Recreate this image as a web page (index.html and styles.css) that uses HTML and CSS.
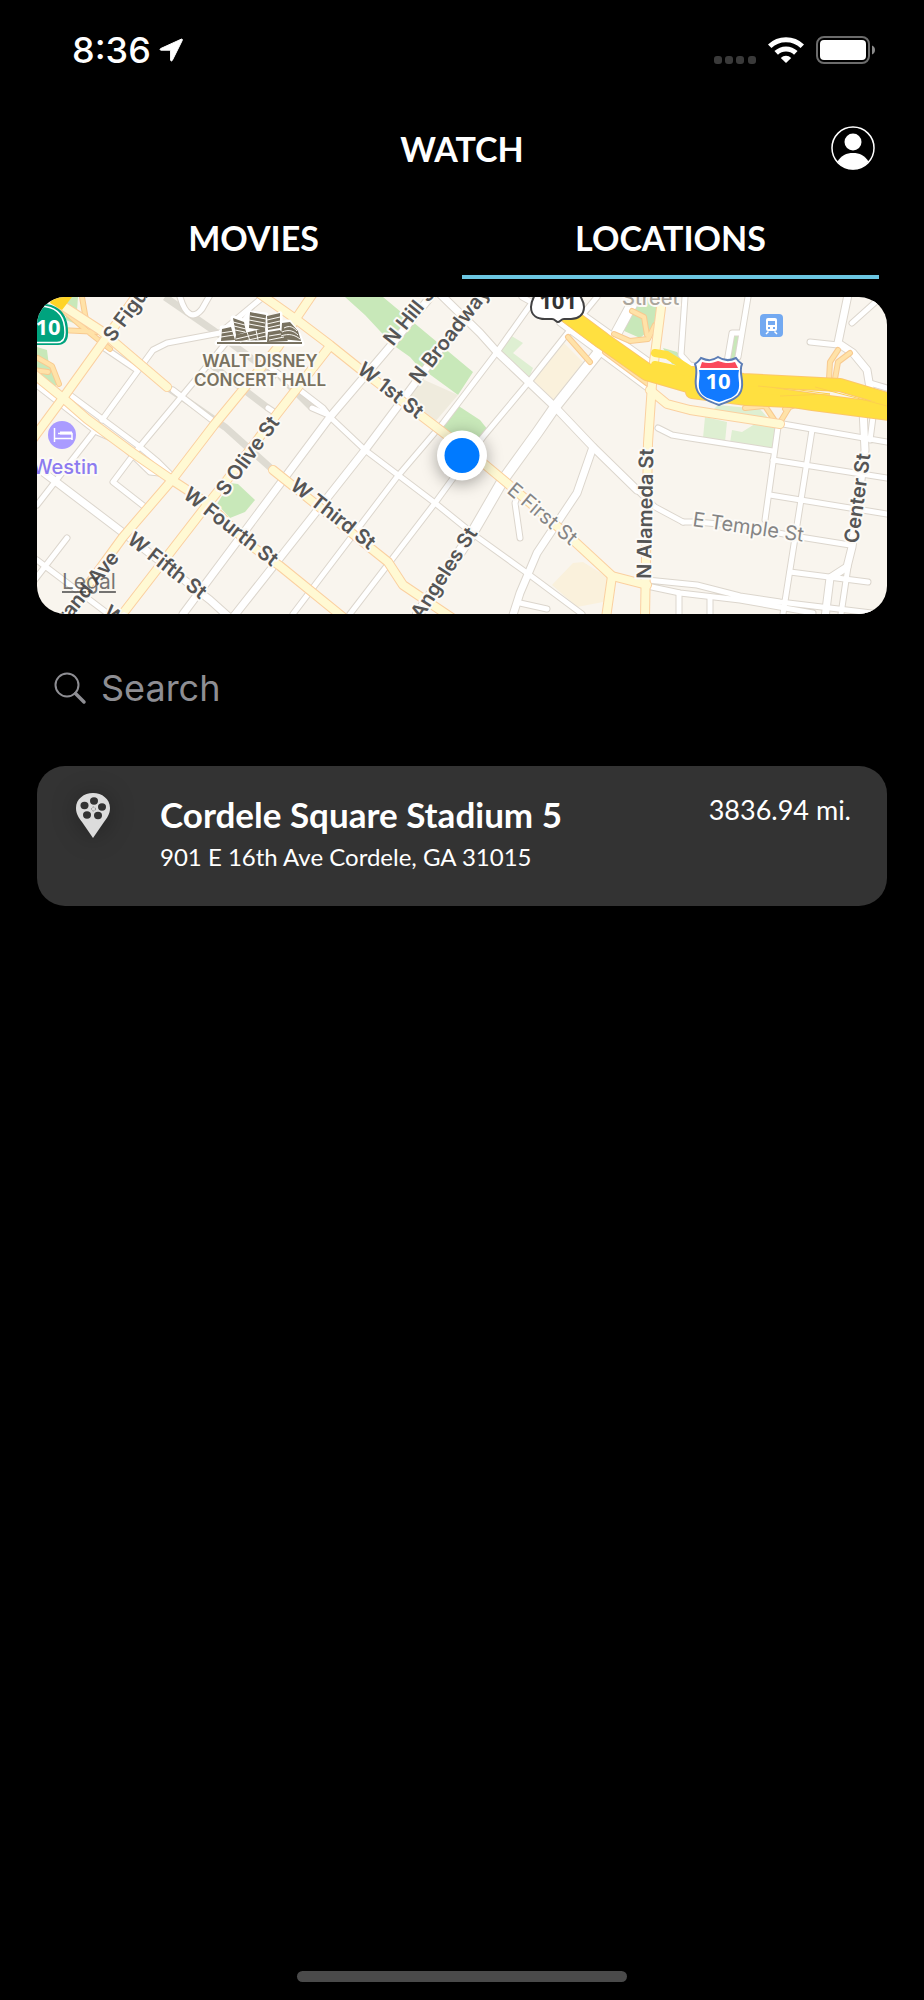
FILE: index.html
```html
<!DOCTYPE html>
<html lang="en">
<head>
    <meta charset="UTF-8">
    <meta name="viewport" content="width=device-width, initial-scale=1.0">
    <title>Watch - Locations</title>
    <link rel="stylesheet" href="styles.css">
</head>
<body>

<div class="status-bar">
    <div class="status-time">
        <span>8:36</span>
        <svg class="icon-arrow" viewBox="0 0 24 24" width="24" height="24" aria-hidden="true">
            <path d="M22.2 1.2 1.6 10.6c-.9.5-.6 1.6.4 1.6h9.600v9.800c0 1 1.200 1.300 1.700.4L23.300 2.300c.4-.8-.3-1.500-1.100-1.100z" fill="#fff" stroke="#fff" stroke-linejoin="round"/>
        </svg>
    </div>
    <div class="status-icons">
        <svg class="icon-signal" viewBox="0 0 42 8" width="42" height="8" aria-hidden="true">
            <g fill="#3a3a3a">
                <rect x="0" width="8" height="8" rx="3"/>
                <rect x="11" width="8" height="8" rx="3"/>
                <rect x="22" width="8" height="8" rx="3"/>
                <rect x="34" width="8" height="8" rx="3"/>
            </g>
        </svg>
        <svg viewBox="0 0 36 26" width="36" height="26" aria-hidden="true">
            <g fill="none" stroke="#fff" stroke-width="5">
                <path d="M1.700 9.300a23.500 23.500 0 0 1 32.600 0"/>
                <path d="M8.200 15.900a14 14 0 0 1 19.600 0"/>
            </g>
            <path d="M18 26l-5.200-5.100a7.400 7.400 0 0 1 10.400 0z" fill="#fff"/>
        </svg>
        <svg viewBox="0 0 60 28" width="60" height="28" aria-hidden="true">
            <rect x="1" y="1" width="52" height="26" rx="7" fill="none" stroke="#6c6c6c" stroke-width="2"/>
            <rect x="4" y="4" width="46" height="20" rx="4" fill="#fff"/>
            <path d="M56 9.500c4 1.500 4 7.500 0 9z" fill="#8a8a8a"/>
        </svg>
    </div>
</div>

<header class="header">
    <h1>WATCH</h1>
    <button type="button" class="profile" aria-label="Profile">
        <svg viewBox="0 0 44 44" width="44" height="44">
            <circle cx="22" cy="22" r="21" fill="none" stroke="#fff" stroke-width="1.500"/>
            <circle cx="22" cy="16" r="8.500" fill="#fff"/>
            <path d="M6.500 35.500C10 29.500 15.500 27 22 27s12 2.500 15.500 8.500A21 21 0 0 1 22 43.500 21 21 0 0 1 6.500 35.500z" fill="#fff"/>
        </svg>
    </button>
</header>

<nav class="tabs">
    <a href="#movies">MOVIES</a>
    <a href="#locations" class="active">LOCATIONS</a>
</nav>

<main>
    <div class="map">
        <svg class="map-canvas" viewBox="37 297 850 317" preserveAspectRatio="xMidYMid slice" role="img" aria-label="Map of downtown">
            <defs>
                <g id="minor">
                    <path d="M30 380 97 432 118 441 150 472 168 474"/>
                    <path d="M70 395 140 447 158 462 172 476"/>
                    <path d="M37 505 93 433"/>
                    <path d="M102 420 153 350 167 343 220 333 263 297"/>
                    <path d="M103 347 137 370"/>
                    <path d="M145 507 113 482 137 450 212 360 250 313"/>
                    <path d="M173 390 212 420"/>
                    <path d="M180 297c6 20 14 22 22 12l8-14"/>
                    <path d="M37 560 107 613M67 538 30 586"/>
                    <path d="M293 614 397 477 443 423 497 352 536 297"/>
                    <path d="M350 614 435 503 483 437 528 383 570 330 597 297"/>
                    <path d="M267 365 323 408 330 417 365 450 435 503 477 537 527 573 582 614"/>
                    <path d="M268 408 277 414M312 408 326 414"/>
                    <path d="M520 538 515 503 517 497M520 603 547 609"/>
                    <path d="M560 323 650 390M577 310 650 362M522 297 533 303"/>
                    <path d="M683 522 697 522 740 526 800 537 850 545"/>
                    <path d="M658 428 672 435 690 438 773 451"/>
                    <path d="M685 297 681 355 690 365 705 367"/>
                    <path d="M748 297 738 357M742 333 732 333 727 362"/>
                    <path d="M810 342 838 345M852 323 880 298M870 383 887 388"/>
                    <path d="M783 424 887 442M873 417 870 440"/>
                    <path d="M778 427 765 520M812 430 783 614"/>
                    <path d="M773 460 887 478M770 495 887 514M790 572 868 582"/>
                    <path d="M848 567 841 614"/>
                    <path d="M647 580 697 585 740 596 780 602 880 614M647 586 680 593 740 600 813 613"/>
                    <path d="M710 598V620M679 593V620"/>
                </g>
                <g id="major">
                    <path d="M30 462 130 538 210 600 230 618"/>
                    <path d="M183 614 330 417 393 343 436 290"/>
                    <path d="M234 616 365 450 410 390 484 290"/>
                    <path d="M436 290 480 333 497 352 555 407 593 447 637 490"/>
                    <path d="M593 447 577 493 537 553 520 593 512 618"/>
                    <path d="M849 290 838 343 853 353 867 370 870 388"/>
                    <path d="M863 410 865 450 852 547 847 567 830 578 825 618"/>
                </g>
                <path id="minor-end" d="M637 490 655 507 683 522"/>
                <path id="avenue" d="M418 614 470 537 503 480 537 433 555 407 602 348M617 332 636 297"/>
                <g id="arterial">
                    <path d="M60 304 100 330 167 387"/>
                    <path d="M30 371 63 398 87 419 133 453 172 480 207 503 250 545 280 566 344 618"/>
                    <path d="M142 288 63 398 32 440"/>
                    <path d="M312 295 295 320 278 347 214 425 172 480 123 537 64 618"/>
                    <path d="M121 616 203 510 227 480 277 414 330 346"/>
                    <path d="M260 294 297 320 330 345 360 369 440 430 483 463 507 483 573 540 612 576 647 585"/>
                    <path d="M612 576 606 618M663 292 653 370 648 443 645 618"/>
                    <path d="M273 470 388 562 403 585 452 618"/>
                    <path d="M650 390 667 404 690 410 780 424"/>
                </g>
                <g id="ramps">
                    <path d="M82 297 86 320 63 310 86 330 110 349M60 330 100 332"/>
                    <path d="M38 358 52 366 59 384M34 370 48 372"/>
                    <path d="M568 337 590 362"/>
                    <path d="M614 334 630 341 648 339 655 325 660 323M632 311 644 317 647 335"/>
                    <path d="M605 352 648 384"/>
                    <path d="M745 408 765 406 775 421M790 406 779 424M800 403 785 409"/>
                    <path d="M829 379 830 362 838 350M835 379 838 362 850 353"/>
                </g>
                <g id="highway">
                    <path d="M556 306 603 341 647 372 692 385 747 392 813 402 890 412"/>
                </g>
                <g id="highway-upper">
                    <path d="M692 373 743 380 840 385 890 400"/>
                    <path d="M692 392 747 399 813 402 890 409"/>
                </g>
                <path id="highway-ramps" d="M655 353 667 355 692 371M655 365 692 373"/>
            </defs>

            <rect class="land" x="37" y="297" width="850" height="317"/>

            <!-- parks and campuses -->
            <g class="park">
                <path d="M345 297H383L473 372 458 395 417 365 410 357 393 345 365 315z"/>
                <path d="M457 405 480 420 488 430 480 445 440 428z"/>
                <path d="M230 483 238 484 255 500 245 512 230 518 217 504z"/>
                <path d="M636 297H662L653 327 640 338 622 330z"/>
                <path d="M663 348 677 352 690 368 672 364z"/>
                <path d="M733 334 740 336 736 362 728 360z"/>
                <path d="M37 347 47 350 49 366 60 383 52 388 37 374z"/>
                <path d="M66 297H78L76 324 66 320z"/>
            </g>
            <g class="park-light">
                <path d="M510 335 523 343 513 353 533 368 529 378 500 350z"/>
                <path d="M705 417 727 422 725 442 703 438zM732 430 742 432 758 422 777 428 773 450 730 443z"/>
                <path d="M718 405 760 409 768 418 712 411z"/>
            </g>
            <path class="plaza" d="M420 378 458 395 434 423 404 402z"/>
            <path class="campus" d="M563 342 583 362 555 402 533 380zM573 563 583 562 612 580 603 602 577 607 552 585z"/>

            <!-- tunnels -->
            <path class="tunnel" d="M165 297 213 330 277 377 M167 387 225 427 273 470 M205 360 268 408 M280 376 312 408"/>

            <use class="casing-minor" href="#minor"/>
            <use class="casing-minor" href="#minor-end"/>
            <use class="casing-major" href="#major"/>
            <use class="casing-avenue" href="#avenue"/>
            <use class="fill-minor" href="#minor"/>
            <use class="fill-minor" href="#minor-end"/>
            <use class="fill-major" href="#major"/>
            <use class="fill-avenue" href="#avenue"/>
            <use class="casing-ramp" href="#ramps"/>
            <use class="fill-ramp" href="#ramps"/>
            <use class="casing-arterial" href="#arterial"/>
            <use class="fill-arterial" href="#arterial"/>
            <use class="casing-highway" href="#highway"/>
            <use class="casing-upper" href="#highway-upper"/>
            <use class="fill-highway" href="#highway"/>
            <use class="fill-upper" href="#highway-upper"/>
            <use class="fill-highway-ramps" href="#highway-ramps"/>
            <path class="median" d="M758 386 800 390 830 394M780 396 830 394M815 387 887 406"/>
            <path class="corner" d="M52 297H72L62 310 50 303z"/>

            <!-- street names -->
            <g class="street">
                <text transform="translate(113 343) rotate(-53)">S Figueroa St</text>
                <text transform="translate(226 497) rotate(-54)">S Olive St</text>
                <text transform="translate(120 558) rotate(-51)" text-anchor="end">Grand Ave</text>
                <text transform="translate(182 497) rotate(38)">W Fourth St</text>
                <text transform="translate(126 542) rotate(38)">W Fifth St</text>
                <text transform="translate(102 615) rotate(38)">W Sixth St</text>
                <text transform="translate(289 488) rotate(38)">W Third St</text>
                <text transform="translate(356 372) rotate(38)">W 1st St</text>
                <text transform="translate(393 347) rotate(-51)">N Hill St</text>
                <text transform="translate(419 385) rotate(-52)">N Broadway</text>
                <text transform="translate(478 533) rotate(-57)" text-anchor="end">Los Angeles St</text>
                <text transform="translate(651 579) rotate(-89)">N Alameda St</text>
                <text transform="translate(858 544) rotate(-82)">Center St</text>
            </g>
            <g class="street street-light">
                <text transform="translate(506 492) rotate(40)">E First St</text>
                <text transform="translate(692 526) rotate(8)">E Temple St</text>
            </g>
            <text class="district" x="622" y="305">Street</text>

            <!-- concert hall -->
            <g class="hall">
                <path class="hall-halo" d="M217 343 222 338 222 328 233 327 233 318 246 322 250 313 266 315 266 323 280 314 280 324 289 322 298 334 302 344z"/>
                <path d="M217 342h85v2h-85z"/>
                <path d="M222 329l9-2 4 13-14 1zM233 318l11 4 2 10-10 3zM250 312l16 3-1 15-16-2zM267 316l13-3v15l-12 2zM282 323l8-1 8 9 3 10-20-2zM236 335l29-7 1 12-31 1zM268 332l12-2 8 11-21 1z"/>
                <path class="hall-lines" d="M221 333l13-2M221 337l13-2M233 322l12 3M234 326l12 3M235 330l10 2M250 316l16 3M249 320l16 3M249 324l16 3M267 320l13-3M267 324l13-3M267 328l13-3M284 328c6-3 9-1 13 3M282 332c7-3 12-1 16 3M281 336c8-3 14-1 19 3M236 339l30-7M240 342l26-6M269 336l12-2M269 340l15-3M247 332l3 9M256 330l2 10"/>
            </g>
            <g class="landmark" text-anchor="middle">
                <text x="260" y="367">WALT DISNEY</text>
                <text x="260" y="386">CONCERT HALL</text>
            </g>

            <!-- hotel -->
            <circle cx="62" cy="435" r="14" fill="#aa9bff"/>
            <path d="M54.500 428v14M54.500 438.500h17.500v-5H58M72 433v7" fill="none" stroke="#fff" stroke-width="1.500"/>
            <path d="M60 431.500h12v3H60z" fill="#fff"/>
            <text class="hotel" x="98" y="474" text-anchor="end">Westin</text>

            <!-- rail station -->
            <rect x="760" y="314" width="23" height="23" rx="4" fill="#73a9f1"/>
            <path d="M768 318h7a2 2 0 0 1 2 2v9a2 2 0 0 1-2 2h-7a2 2 0 0 1-2-2v-9a2 2 0 0 1 2-2z" fill="#fff"/>
            <path d="M768 321h7v4h-7zM768 327h2v2h-2zM773 327h2v2h-2z" fill="#73a9f1"/>
            <path d="M768.500 331.500l-2.500 2.500M774.500 331.500l2.500 2.500" stroke="#fff" stroke-width="1.500"/>

            <!-- highway shields -->
            <path d="M36 304h10c16 2 23 14 22 30 0 7-4 11-10 11H36z" fill="#00a37e"/>
            <path d="M36 306.500h9c14 2 20 12 20 26 0 7-3 10-8 10H36" fill="none" stroke="#fff" stroke-width="1.500"/>
            <text class="shield" x="48" y="335">10</text>

            <path d="M537 290c-3 8-6 10-6 17 0 9 7 12 14 12h7c3 0 4 3 6 3s3-3 6-3h7c7 0 13-4 13-12 0-7-4-9-6-17z" fill="#fff" stroke="#414142" stroke-width="2"/>
            <text class="shield shield-dark" x="558" y="309">101</text>

            <path d="M701 358c7 3 11 3 17-1 6 4 12 4 18 1 2 3 3 4 6 6-4 9 3 16-1 27-3 8-12 10-22 14-11-4-19-7-22-15-4-10 2-17-2-26 3-2 4-3 6-6z" fill="#fff" stroke="#5c7db5" stroke-width="2"/>
            <path d="M702 362c6 2 11 1 16-1 6 2 11 3 17 1l3 6h-38z" fill="#fb4a5c"/>
            <path d="M699 370h40c-2 8 2 14-1 21-2 6-10 8-19 11-9-3-17-5-19-11-3-7 1-14-1-21z" fill="#127aff"/>
            <text class="shield" x="718" y="389">10</text>

            <!-- current position -->
            <circle class="marker" cx="462" cy="455.500" r="25"/>
            <circle cx="462" cy="455.500" r="17.500" fill="#007aff"/>
        </svg>
        <a href="#legal" class="legal">Legal</a>
    </div>

    <form class="search" role="search">
        <label for="search">
            <svg viewBox="0 0 34 34" width="34" height="34" role="img" aria-label="Search theaters">
                <g fill="none" stroke="#8e8e93" stroke-linecap="round">
                    <circle cx="14" cy="14" r="11.500" stroke-width="2"/>
                    <path d="M22.500 22.500 31 31" stroke-width="3.500"/>
                </g>
            </svg>
        </label>
        <input type="search" id="search" placeholder="Search">
    </form>

    <article class="theater">
        <svg class="pin" viewBox="0 0 34 46" width="34" height="46" aria-hidden="true">
            <path d="M17 1C8 1 0 7 0 16c0 6 3 10 6 14l11 16 11-16c3-4 6-8 6-14C34 7 26 1 17 1z" fill="#dcdcdc"/>
            <g fill="#333">
                <ellipse cx="18" cy="9" rx="4" ry="3.700"/>
                <ellipse cx="8.500" cy="13.500" rx="4" ry="3.700"/>
                <ellipse cx="26" cy="15" rx="4" ry="3.700"/>
                <ellipse cx="11" cy="23" rx="4" ry="3.700"/>
                <ellipse cx="22" cy="23.500" rx="4" ry="3.700"/>
            </g>
            <circle cx="17.500" cy="17" r="2" fill="none" stroke="#888" stroke-dasharray="1.500 1"/>
        </svg>
        <div class="theater-info">
            <h2>Cordele Square Stadium 5</h2>
            <p>901 E 16th Ave Cordele, GA 31015</p>
        </div>
        <span class="distance">3836.94 mi.</span>
    </article>
</main>

<div class="home-indicator"></div>

</body>
</html>
```

FILE: styles.css
```css
* {
    box-sizing: border-box;
}
body {
    margin: 0;
    min-height: 100vh;
    display: flex;
    flex-direction: column;
    background: #000;
    color: #fff;
    font-family: Lato, "Liberation Sans", sans-serif;
}
h1, h2, p {
    margin: 0;
}

/* status bar */
.status-bar {
    display: flex;
    justify-content: space-between;
    align-items: center;
    height: 100px;
    padding: 0 48px 0 72px;
    font-family: Inter, sans-serif;
    font-size: 36px;
    font-weight: 500;
}
.status-time,
.status-icons {
    display: flex;
    align-items: center;
}
.status-time {
    gap: 8px;
}
.status-icons {
    gap: 12px;
}
.icon-signal {
    align-self: flex-end;
}

/* header */
.header {
    display: grid;
    grid-template-columns: 1fr auto 1fr;
    align-items: center;
    height: 96px;
    padding: 0 49px;
}
.header h1 {
    grid-column: 2;
    font-size: 34px;
    font-weight: 700;
}
.profile {
    justify-self: end;
    display: flex;
    padding: 0;
    border: 0;
    background: none;
}

.tabs {
    display: flex;
    padding: 0 45px;
}
.tabs a {
    flex: 1;
    height: 83px;
    border-bottom: 4px solid transparent;
    color: #fff;
    font-size: 34px;
    font-weight: 700;
    line-height: 84px;
    text-align: center;
    text-decoration: none;
}
.tabs .active {
    border-color: #6bc6e2;
}

main {
    flex: 1;
    padding: 18px 37px;
}

/* map */
.map {
    position: relative;
    height: 317px;
    border-radius: 28px;
    overflow: hidden;
    font-family: Inter, sans-serif;
}
.map-canvas {
    display: block;
    width: 100%;
    height: 100%;
}
.map-canvas use {
    fill: none;
    stroke-linecap: round;
    stroke-linejoin: round;
}
.land { fill: #f9f5ee; }
.park { fill: #c8e8b9; }
.park-light { fill: #deefd2; }
.plaza { fill: #efebdd; }
.campus { fill: #faf1dc; }
.corner { fill: #ffd426; }
.tunnel {
    fill: none;
    stroke: #dedbd2;
    stroke-width: 7;
}
.casing-minor { stroke: #dcd6cd; stroke-width: 7; }
.fill-minor { stroke: #fff; stroke-width: 5; }
.casing-major { stroke: #dcd6cd; stroke-width: 9; }
.fill-major { stroke: #fff; stroke-width: 7; }
.casing-avenue { stroke: #dcd6cd; stroke-width: 12; }
.fill-avenue { stroke: #fff; stroke-width: 10; }
.casing-arterial { stroke: #fbd0a0; stroke-width: 10; }
.fill-arterial { stroke: #fff9d3; stroke-width: 8; }
.casing-ramp { stroke: #f8ca90; stroke-width: 6; }
.fill-ramp { stroke: #ffe2a8; stroke-width: 4; }
.casing-highway { stroke: #fcc76a; stroke-width: 18; }
.fill-highway { stroke: #ffe040; stroke-width: 16; }
.casing-upper { stroke: #fcc76a; stroke-width: 14; }
.fill-upper { stroke: #ffe040; stroke-width: 12; }
.fill-highway-ramps { stroke: #ffe040; stroke-width: 8; }
.median {
    fill: none;
    stroke: #fdd04c;
    stroke-width: 1;
}
.street,
.landmark,
.hotel,
.district {
    paint-order: stroke;
    stroke: #fcfaf6;
    stroke-width: 4px;
    stroke-linejoin: round;
}
.street {
    fill: #555;
    font-size: 20px;
    font-weight: 600;
}
.street-light {
    fill: #858585;
    font-weight: 400;
}
.district {
    fill: #aaa59c;
    font-size: 20px;
    font-weight: 500;
}
.landmark {
    fill: #797260;
    font-size: 17px;
    font-weight: 600;
}
.hotel {
    fill: #8c7bf0;
    font-size: 20px;
    font-weight: 500;
}
.hall {
    fill: #797260;
}
.hall-halo {
    fill: #fff;
    stroke: #fff;
    stroke-width: 5;
    stroke-linejoin: round;
}
.hall-lines {
    fill: none;
    stroke: #fbf9f4;
    stroke-width: 1;
}
.shield {
    fill: #fff;
    font-family: "Open Sans", sans-serif;
    font-size: 22px;
    font-weight: 700;
    text-anchor: middle;
}
.shield-dark {
    fill: #333;
}
.marker {
    fill: #fff;
    filter: drop-shadow(0 3px 8px rgba(0, 0, 0, 0.35));
}
.legal {
    position: absolute;
    left: 25px;
    bottom: 20px;
    color: rgba(60, 60, 60, 0.7);
    font-size: 21px;
    line-height: 24px;
}

/* search */
.search {
    display: flex;
    align-items: center;
    gap: 14px;
    height: 148px;
    margin-bottom: 4px;
    padding: 0 16px;
}
.search label {
    display: flex;
}
.search input {
    flex: 1;
    min-width: 0;
    padding: 0;
    border: 0;
    outline: 0;
    background: none;
    color: #fff;
    font-family: Inter, sans-serif;
    font-size: 36px;
    font-weight: 400;
}
.search input::placeholder {
    color: #8e8e93;
    opacity: 1;
}

/* theater card */
.theater {
    display: flex;
    align-items: flex-start;
    min-height: 140px;
    padding: 26px 36px 26px 39px;
    border-radius: 28px;
    background: #333;
}
.pin {
    flex: none;
    margin-right: 50px;
    filter: drop-shadow(0 2px 12px rgba(0, 0, 0, 0.3));
}
.theater-info {
    flex: 1;
}
.theater-info h2 {
    font-size: 35px;
    font-weight: 700;
    line-height: 44px;
}
.theater-info p {
    font-size: 24px;
    line-height: 42px;
}
.distance {
    font-size: 27px;
    line-height: 36px;
}

.home-indicator {
    align-self: center;
    width: 330px;
    height: 11px;
    margin-bottom: 18px;
    border-radius: 6px;
    background: #4a4a4a;
}
```
